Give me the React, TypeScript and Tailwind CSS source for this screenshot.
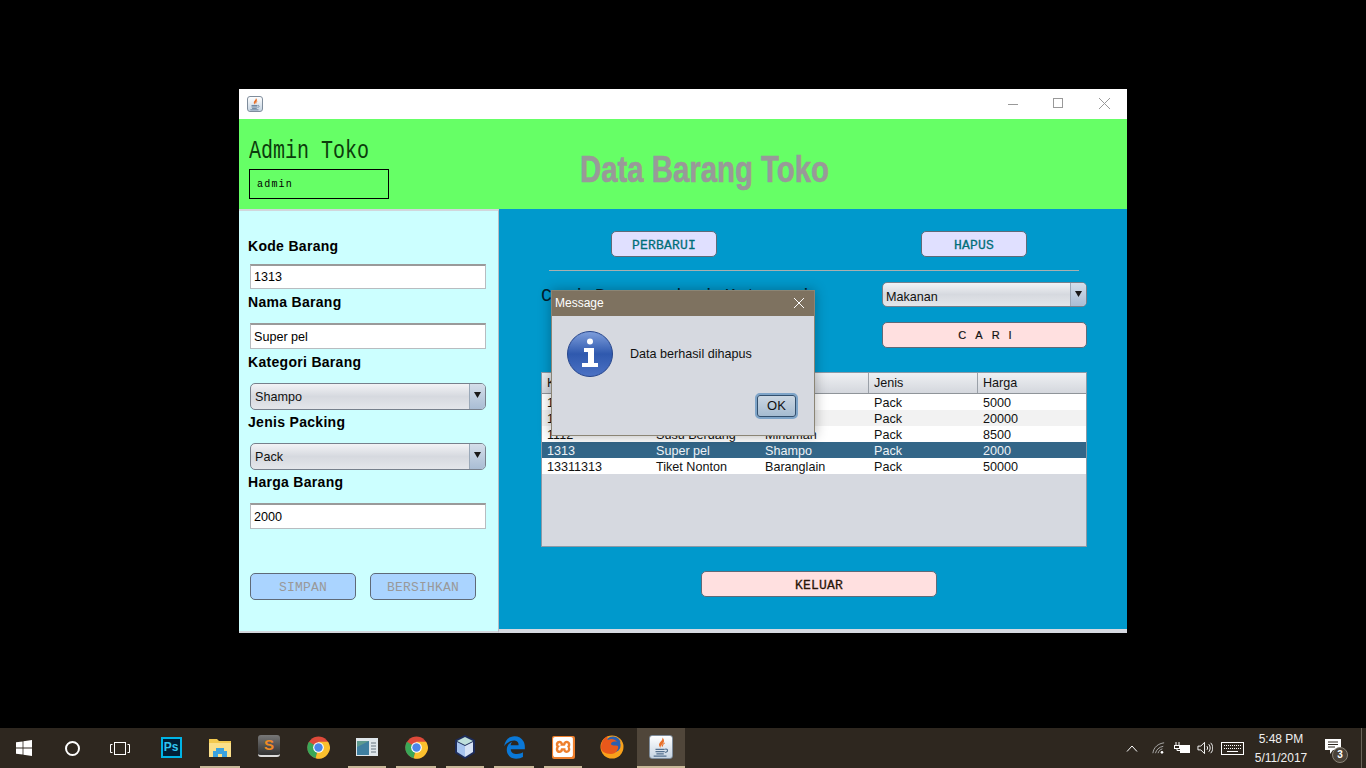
import React from 'react';
import { SiXampp } from 'react-icons/si';
import { FaEdgeLegacy } from 'react-icons/fa6';

const sans = "font-['Liberation_Sans',Arial,sans-serif]";
const mono = "font-['Liberation_Mono','DejaVu_Sans_Mono',monospace]";

const rows = [
  ['1111', 'Indomie', 'Snack', 'Pack', '5000'],
  ['1212', 'Sabun', 'Shampo', 'Pack', '20000'],
  ['1112', 'Susu Berdang', 'Minuman', 'Pack', '8500'],
  ['1313', 'Super pel', 'Shampo', 'Pack', '2000'],
  ['13311313', 'Tiket Nonton', 'Baranglain', 'Pack', '50000'],
];

const headers = ['Kode', 'Nama', 'Kategori', 'Jenis', 'Harga'];

const Label = ({ text, className = '' }: { text: string; className?: string }) => (
  <div className={`h-5 leading-5 text-[14px] font-bold text-black tracking-[0.3px] ${className}`}>{text}</div>
);

const Field = ({ value, className = '' }: { value: string; className?: string }) => (
  <div className={`ml-[2px] w-[236px] bg-white border border-[#b8bcc0] border-t-2 border-t-[#9a9a9a] pl-[3px] text-[12.6px] text-black flex items-center ${className}`}>
    {value}
  </div>
);

const Combo = ({ value, className = '', textClass = 'pt-[2px] pl-[4px]' }: { value: string; className?: string; textClass?: string }) => (
  <div className={`flex rounded-[5px] border border-[#77808c] bg-gradient-to-b from-[#f2f3f6] via-[#d6d9df] to-[#e4e6ea] overflow-hidden text-[12.6px] text-[#111] ${className}`}>
    <div className={`flex-1 flex items-center ${textClass}`}>{value}</div>
    <div className="w-[16px] flex items-start pt-[8px] justify-center border-l border-[#9aa8b8] bg-gradient-to-b from-[#d4deea] to-[#a9bdd4]">
      <svg width="7" height="6" viewBox="0 0 7 6"><path d="M0 0h7L3.500 6z" fill="#1a1a1a" /></svg>
    </div>
  </div>
);

const SwingButton = ({ text, className = '' }: { text: string; className?: string }) => (
  <div className={`flex items-center justify-center rounded-[5px] border border-[#5f6a78] ${className}`}>{text}</div>
);

const WindowControls = () => (
  <div className="ml-auto flex items-center">
    <svg width="46" height="30" viewBox="0 0 46 30"><path d="M19 15.500h10" stroke="#999" /></svg>
    <svg width="46" height="30" viewBox="0 0 46 30"><rect x="18.500" y="9.500" width="9" height="9" fill="none" stroke="#999" /></svg>
    <svg width="46" height="30" viewBox="0 0 46 30"><path d="M18 9l11 11M29 9L18 20" stroke="#999" /></svg>
  </div>
);

const JavaTile = ({ size }: { size: number }) => (
  <div className="flex items-center justify-center rounded-[3px] bg-gradient-to-b from-white to-[#c6d4e2] border border-[#7f8d9c]" style={{ width: size, height: size }}>
    <svg width={size - 2} height={size - 2} viewBox="0 0 24 24" fill="none">
      <path d="M13.500 1.500c1 3.500-4.500 5.500-3.500 9 .4 1.300 1.500 2.500 1.500 2.500-.8-2.500 3.800-4.500 3.800-7.500 0-1.700-.8-3.200-1.800-4z" fill="#e8702a" />
      <path d="M16 7.500c-1.500 1-3 2-2.500 4" stroke="#e8702a" strokeWidth="1.200" />
      <path d="M6 14.500h10M6 17h10M7 19.500h8M4 22h14" stroke="#54708e" strokeWidth="1.400" />
      <path d="M16.500 14.500c3-.8 4 2.500 0 3.500" stroke="#54708e" strokeWidth="1.200" />
    </svg>
  </div>
);

const InfoIcon = () => (
  <svg width="48" height="48" viewBox="0 0 48 48">
    <defs>
      <linearGradient id="infoBg" x1="0" y1="0" x2="0" y2="1">
        <stop offset="0" stopColor="#7f9fdc" />
        <stop offset="0.5" stopColor="#2f59ae" />
        <stop offset="1" stopColor="#4c72c4" />
      </linearGradient>
    </defs>
    <circle cx="24" cy="24" r="22.500" fill="url(#infoBg)" stroke="#27468c" />
    <circle cx="24" cy="11.500" r="3" fill="#fff" />
    <path d="M18 18h10v15h4v4H16v-4h6V22h-4z" fill="#fff" />
  </svg>
);

const ChromeIcon = () => (
  <svg width="23" height="23" viewBox="0 0 24 24">
    <circle cx="12" cy="12" r="11.500" fill="#de4a3a" />
    <path d="M12 12L2 6A11.500 11.500 0 0 0 9 23.200z" fill="#3aa757" />
    <path d="M12 12l-3 11.200A11.500 11.500 0 0 0 22 6H12z" fill="#fbc02d" />
    <circle cx="12" cy="12" r="5.600" fill="#fff" />
    <circle cx="12" cy="12" r="4.400" fill="#4a86e8" />
  </svg>
);

const FolderIcon = () => (
  <svg width="22" height="19" viewBox="0 0 22 19">
    <path d="M0 1h8l2 2h12v15H0z" fill="#f3c94f" />
    <path d="M0 5h22v14H0z" fill="#fbe08a" />
    <path d="M4 19v-6h3v-3h8v3h3v6h-5v-3h-4v3z" fill="#3aa3e0" />
  </svg>
);

const SublimeIcon = () => (
  <div className="mb-[3px] w-[22px] h-[22px] rounded-[3px] bg-gradient-to-b from-[#777] to-[#333] border-b-2 border-[#ddd] flex items-center justify-center text-[15px] font-bold text-[#f08a24] leading-none">
    S
  </div>
);

const SheetIcon = () => (
  <svg width="22" height="18" viewBox="0 0 22 18">
    <rect width="22" height="18" fill="#dfe6ea" />
    <rect x="1" y="3" width="12" height="14" fill="#5d9a8e" />
    <path d="M1 9l12-6v14H1z" fill="#3f7fa0" />
    <path d="M15 5h5M15 8h5M15 11h5M15 14h5" stroke="#66757f" />
  </svg>
);

const CubeIcon = () => (
  <svg width="22" height="24" viewBox="0 0 22 24">
    <path d="M11 0l10 5v13l-10 6-10-6V5z" fill="#1d2c5a" />
    <path d="M11 2l8 4-8 4-8-4z" fill="#bfe0dc" />
    <path d="M3 7l8 4v11l-8-5z" fill="#a7c4ee" />
    <path d="M19 7l-8 4v11l8-5z" fill="#d7e3f5" />
  </svg>
);

const FirefoxIcon = () => (
  <svg width="24" height="24" viewBox="0 0 24 24">
    <circle cx="12" cy="12" r="11.500" fill="#f9a11b" />
    <circle cx="13" cy="9.500" r="8" fill="#2a5fb0" />
    <path d="M1 11C2 5 5 2 8 1c-1 2-1 3 0 4 3-2 7-1 9 2-3-1-6 0-6 2s5 1 7 2c1 3-2 8-7 8-6 0-11-3-10-8z" fill="#e8581b" />
    <path d="M23 11c0 7-5 12-11 12-3 0-5-1-7-3 6 2 13 0 15-5 1-2 1-5 0-8 2 1 3 2 3 4z" fill="#f9a11b" />
  </svg>
);

const PsIcon = () => (
  <div className="w-[21px] h-[21px] bg-[#001e36] border-2 border-[#00b4e6] flex items-center justify-center text-[12px] font-bold text-[#31c5f0] leading-none">
    Ps
  </div>
);

const dock = [
  { w: 'w-[48px]', line: false, icon: <PsIcon /> },
  { w: 'w-[50px]', line: true, icon: <FolderIcon /> },
  { w: 'w-[48px]', line: false, icon: <SublimeIcon /> },
  { w: 'w-[50px]', line: false, icon: <ChromeIcon /> },
  { w: 'w-[48px]', line: true, icon: <SheetIcon /> },
  { w: 'w-[50px]', line: true, icon: <ChromeIcon /> },
  { w: 'w-[48px]', line: true, icon: <CubeIcon /> },
  { w: 'w-[50px]', line: true, icon: <FaEdgeLegacy size={23} color="#0a78d7" /> },
  { w: 'w-[48px]', line: true, icon: <div className="w-[23px] h-[23px] rounded-[2px] bg-[#ee7f2d] flex items-center justify-center"><SiXampp size={20} color="#fff" /></div> },
  { w: 'w-[50px]', line: false, icon: <FirefoxIcon /> },
];

const Taskbar = () => (
  <div className={`h-10 bg-[#2e271f] flex items-stretch text-white ${sans}`}>
    <div className="w-12 flex items-center justify-center">
      <svg width="16" height="16" viewBox="0 0 16 16" fill="#fff"><path d="M0 2.300l6.600-.9v6.200H0zM7.400 1.300L16 0v7.600H7.400zM0 8.400h6.600v6.200L0 13.700zM7.400 8.400H16V16l-8.600-1.200z" /></svg>
    </div>
    <div className="w-12 flex items-center justify-center">
      <div className="w-[15px] h-[15px] rounded-full border-2 border-white" />
    </div>
    <div className="w-[48px] flex items-center justify-center">
      <svg width="20" height="13" viewBox="0 0 20 13" fill="none" stroke="#fff"><rect x="4.500" y="0.500" width="11" height="12" /><path d="M2.500 2.500H.5v8h2M17.500 2.500h2v8h-2" /></svg>
    </div>
    <div className="w-[3px]" />
    {dock.map((d, i) => (
      <div key={i} className={`${d.w} flex flex-col`}>
        <div className="flex-1 flex items-center justify-center">{d.icon}</div>
        <div className={`mx-[5px] h-[2px] ${d.line ? 'bg-[#c8b898]' : ''}`} />
      </div>
    ))}
    <div className="w-[48px] bg-[#50463a] flex flex-col">
      <div className="flex-1 flex items-center justify-center"><JavaTile size={24} /></div>
      <div className="h-[2px] bg-[#c8b898]" />
    </div>
    <div className="ml-auto flex items-center">
      <svg width="12" height="7" viewBox="0 0 12 7" fill="none" stroke="#fff" className="mr-[14px]"><path d="M1 6.500L6 1l5 5.500" /></svg>
      <svg width="13" height="14" viewBox="0 0 15 14" fill="none" stroke="#bbb" className="mr-[8px]"><path d="M1 13C2 6 7 2 14 1M4 13c1-4 4-7 9-8M7 13c1-3 2-4 5-5" /><circle cx="11.500" cy="12" r="1.500" fill="#fff" stroke="none" /></svg>
      <svg width="17" height="12" viewBox="0 0 17 12" fill="none" stroke="#fff" className="mr-[7px]"><path d="M3 0v3M6 0v3" /><rect x="1.500" y="3.500" width="5" height="3" /><path d="M4 6.500v2h3" /><rect x="7.500" y="3.500" width="9" height="7" fill="#fff" /></svg>
      <svg width="16" height="14" viewBox="0 0 17 14" fill="none" stroke="#fff" className="mr-[8px]"><path d="M1 5h3l4-4v12L4 9H1zM10.500 5c1 1 1 3 0 4M12.500 3c2 2 2 6 0 8M14.500 1.500c3 3 3 8 0 11" /></svg>
      <svg width="23" height="13" viewBox="0 0 23 13" fill="none" stroke="#fff" className="mr-[6px]"><rect x="0.500" y="0.500" width="22" height="12" /><path d="M3 3.500h17M3 6.500h17" strokeDasharray="1 1" /><path d="M6 9.500h11" /></svg>
      <div className="w-[62px] text-center text-[12px] leading-[19px] pt-[1px] text-[#f0f0f0]">
        <div>5:48 PM</div>
        <div>5/11/2017</div>
      </div>
      <div className="relative w-[38px] h-full flex items-center ml-[11px]">
        <svg width="16" height="15" viewBox="0 0 16 15" className="ml-[2px] mb-[4px]"><path d="M0 0h16v11H8l-3 4v-4H0z" fill="#fff" /><path d="M3 3h10M3 5.500h10M3 8h7" stroke="#2e271f" /></svg>
        <div className="absolute left-[9px] top-[19px] w-[16px] h-[16px] rounded-full bg-[#4a4238] border border-[#8a8478] flex items-center justify-center text-[10px] font-bold leading-none">3</div>
      </div>
      <div className="w-[5px] h-full border-l border-[#6a645a]" />
    </div>
  </div>
);

const Dialog = () => (
  <div className="absolute left-[312px] top-[201px] w-[264px] h-[146px] bg-[#d6d9e0] border border-[#8b8575] flex flex-col shadow-[0_0_12px_rgba(0,0,0,0.3)]">
    <div className="h-[25px] bg-[#7e7260] flex items-center pl-[3px] pb-[2px] text-[12px] text-white">
      Message
      <svg width="12" height="12" viewBox="0 0 12 12" className="ml-auto mr-[9px]"><path d="M1 1l10 10M11 1L1 11" stroke="#fff" /></svg>
    </div>
    <div className="flex items-start pl-[14px] pt-[14px]">
      <InfoIcon />
      <div className="ml-[16px] mt-[17px] text-[12.6px] leading-[14px] text-[#111]">Data berhasil dihapus</div>
    </div>
    <div className="ml-[203px] mt-[15px] w-[43px] h-[26px] rounded-[5px] border-2 border-[#7ea4c8] bg-gradient-to-b from-[#cdd8e3] to-[#a3bad0] shadow-[inset_0_0_0_1px_#33506e] flex items-center justify-center text-[13px] text-[#111]">
      OK
    </div>
  </div>
);

const LeftPanel = () => (
  <div className="w-[260px] shrink-0 bg-[#ccffff] border-t-2 border-t-[#d2d6dc] border-r border-r-[#b8bcc4] border-b-2 border-b-[#d2d6dc] pl-[9px] pt-[25px] h-[424px]">
    <Label text="Kode Barang" />
    <Field value="1313" className="mt-[8px] h-[25px]" />
    <Label text="Nama Barang" className="mt-[3px]" />
    <Field value="Super pel" className="mt-[11px] h-[26px] pt-[2px]" />
    <Label text="Kategori Barang" className="mt-[3px]" />
    <Combo value="Shampo" className="ml-[2px] mt-[11px] w-[236px] h-[27px]" />
    <Label text="Jenis Packing" className="mt-[2px]" />
    <Combo value="Pack" className="ml-[2px] mt-[11px] w-[236px] h-[27px]" />
    <Label text="Harga Barang" className="mt-[2px]" />
    <Field value="2000" className="mt-[11px] h-[26px] pt-[2px]" />
    <div className={`ml-[2px] mt-[44px] flex gap-[14px] text-[13px] tracking-[0.2px] text-[#999] ${mono}`}>
      <SwingButton text="SIMPAN" className="w-[106px] h-[27px] pt-[2px] bg-[#aad4ff]" />
      <SwingButton text="BERSIHKAN" className="w-[106px] h-[27px] pt-[2px] bg-[#aad4ff]" />
    </div>
  </div>
);

const DataTable = () => (
  <div className="ml-[42px] mt-[24px] w-[546px] h-[175px] bg-[#d6d9e0] border border-[#8a99a6] text-[12.6px]">
    <div className="h-[21px] grid grid-cols-[109px_109px_109px_109px_108px] border-b border-[#8f9499] bg-gradient-to-b from-[#eef0f3] to-[#d4d7dd] text-[#111]">
      {headers.map((h) => (
        <div key={h} className="pl-[5px] flex items-center border-r border-[#9aa0a8] last:border-r-0">{h}</div>
      ))}
    </div>
    {rows.map((r, i) => (
      <div
        key={r[0]}
        className={`h-4 leading-4 pt-[1px] grid grid-cols-[109px_109px_109px_109px_108px] ${
          i === 3 ? 'bg-[#336688] text-[#eef2f6]' : i === 1 ? 'bg-[#f2f2f2] text-[#111]' : 'bg-white text-[#111]'
        }`}
      >
        {r.map((c, j) => (
          <div key={j} className="pl-[5px]">{c}</div>
        ))}
      </div>
    ))}
  </div>
);

const RightPanel = () => (
  <div className="flex-1 flex flex-col h-[424px]">
    <div className="flex-1 bg-[#0099cc] pt-[22px]">
      <div className={`ml-[112px] flex gap-[204px] text-[13px] tracking-[0.2px] text-[#006e78] [-webkit-text-stroke:0.3px_#006e78] ${mono}`}>
        <SwingButton text="PERBARUI" className="w-[106px] h-[26px] pt-[3px] bg-[#e0e0ff]" />
        <SwingButton text="HAPUS" className="w-[106px] h-[26px] pt-[3px] bg-[#e0e0ff]" />
      </div>
      <div className="ml-[50px] mt-[13px] w-[530px] h-px bg-[#a8b0b0]" />
      <div className="mt-[11px] flex">
        <div className={`ml-[42px] mt-[4px] text-[18px] leading-[20px] text-[#02202c] ${mono}`}>Cari Barang dari Kategori</div>
        <div className="ml-auto mr-[40px] w-[205px]">
          <Combo value="Makanan" className="h-[25px]" textClass="pt-[5px] pl-[3px]" />
          <div className="mt-[15px] h-[26px] rounded-[5px] border border-[#5f6a78] bg-[#ffe0e0] flex items-center justify-center text-[11px] tracking-[9px] pl-[10px] text-[#111] [-webkit-text-stroke:0.2px_#111]">
            CARI
          </div>
        </div>
      </div>
      <DataTable />
      <div className={`ml-[202px] mt-[24px] w-[236px] h-[26px] pt-[4px] rounded-[5px] border border-[#5f6a78] bg-[#ffe0e0] flex items-center justify-center text-[13px] tracking-[0.2px] text-[#2a1608] [-webkit-text-stroke:0.3px_#2a1608] ${mono}`}>
        KELUAR
      </div>
    </div>
    <div className="h-1 bg-[#d6d9e0]" />
  </div>
);

const App: React.FC = () => {
  return (
    <div className={`w-[1366px] h-[768px] bg-black flex flex-col overflow-hidden ${sans}`}>
      <div className="flex-1 pt-[89px] pl-[239px]">
        <div className="relative w-[888px]">
          <div className="h-[30px] bg-white flex items-center pl-2">
            <JavaTile size={16} />
            <WindowControls />
          </div>
          <div className="h-[90px] bg-[#66ff66] flex">
            <div className={`pl-[10px] pt-[20px] w-[341px] shrink-0 ${mono}`}>
              <div className="text-[25px] leading-[26px] text-[#0c3d0c] origin-left scale-x-[0.8]">Admin Toko</div>
              <div className="mt-[4px] w-[140px] h-[30px] border border-black flex items-center pl-[7px] text-[10px] tracking-[1.200px] text-black">admin</div>
            </div>
            <div className="text-[37px] font-bold text-[#999] [-webkit-text-stroke:0.6px_#999] leading-none pt-[32px] origin-left scale-x-[0.793]">Data Barang Toko</div>
          </div>
          <div className="flex">
            <LeftPanel />
            <RightPanel />
          </div>
          <Dialog />
        </div>
      </div>
      <Taskbar />
    </div>
  );
};

export default App;
